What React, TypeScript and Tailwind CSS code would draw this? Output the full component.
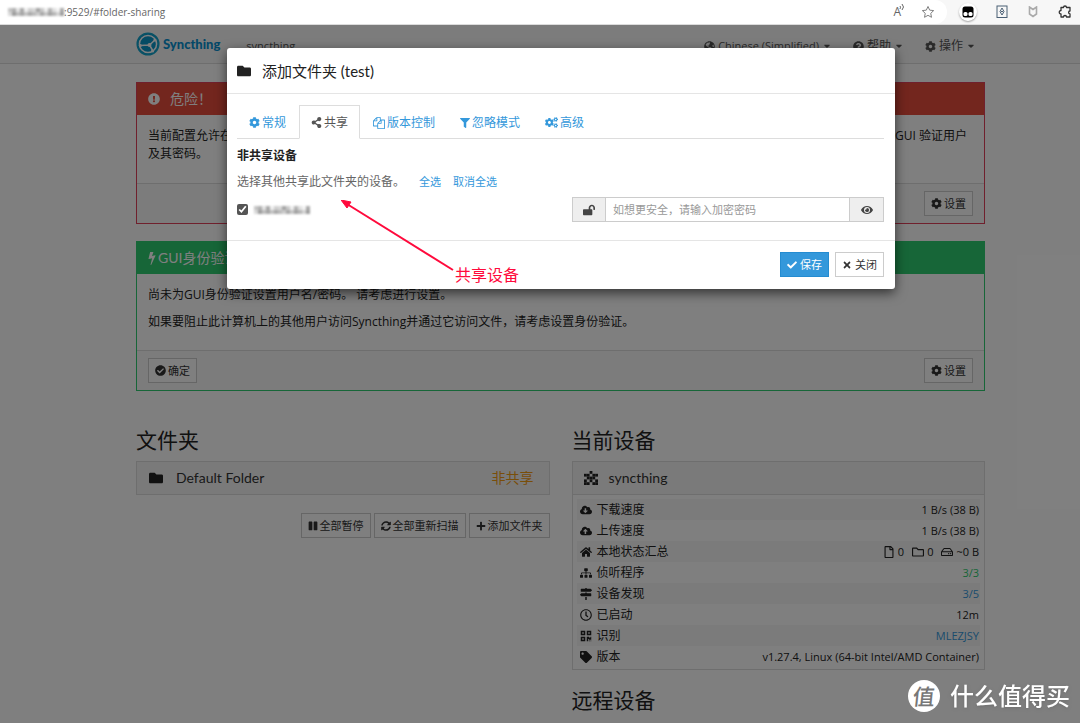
import React from "react";
import {
  FaCaretDown, FaCheck, FaCheckCircle, FaCloudDownloadAlt, FaCloudUploadAlt, FaCog, FaCogs,
  FaExclamationCircle, FaEye, FaFilter, FaFolder, FaGlobeAmericas, FaHome, FaLockOpen, FaMapSigns,
  FaPause, FaPlus, FaQrcode, FaQuestionCircle, FaRegClock, FaRegFile, FaRegFolder, FaRegHdd,
  FaShareAlt, FaSitemap, FaSyncAlt, FaTag, FaTimes,
} from "react-icons/fa";

const BODY = "font-['Open_Sans','Noto_Sans_CJK_SC',sans-serif]";
const HEAD = "font-['Lato','Noto_Sans_CJK_SC',sans-serif]";

function CopyIcon() {
  return (
    <svg viewBox="0 0 1792 1792" className="size-3" fill="currentColor" aria-hidden="true">
      <path d="M1696 384q40 0 68 28t28 68v1216q0 40-28 68t-68 28h-960q-40 0-68-28t-28-68v-288h-544q-40 0-68-28t-28-68v-672q0-40 20-88t48-76l408-408q28-28 76-48t88-20h416q40 0 68 28t28 68v328q68-40 128-40h416zm-544 213l-299 299h299v-299zm-640-384l-299 299h299v-299zm196 647l316-316v-416h-384v416q0 40-28 68t-68 28h-416v640h512v-256q0-40 20-88t48-76zm956 804v-1152h-384v416q0 40-28 68t-68 28h-416v640h896z" />
    </svg>
  );
}

function BoltIcon() {
  return (
    <svg viewBox="448 0 896 1792" className="h-3.5 w-2" fill="currentColor" aria-hidden="true">
      <path d="M1333 566q18 20 7 44l-540 1157q-13 25-42 25-4 0-14-2-17-5-25.500-19t-4.500-30l197-808-406 101q-4 1-12 1-18 0-31-11-18-15-13-39l201-825q4-14 16-23t28-9h328q19 0 32 12.500t13 29.500q0 8-5 18l-171 463 396-98q8-2 12-2 19 0 34 15z" />
    </svg>
  );
}

function SyncthingLogo() {
  return (
    <svg viewBox="0 0 24 24" className="size-6" aria-hidden="true">
      <circle cx="12" cy="12" r="10.800" fill="#0b96c8" stroke="#12a5cc" strokeWidth="1.500" />
      <circle cx="12" cy="12" r="8.600" fill="none" stroke="#fff" strokeWidth="1.500" />
      <path d="M13.500 13 4 13.500M13.500 13 19.500 7.500M13.500 13l3.500 6" stroke="#fff" strokeWidth="1.500" fill="none" />
      <circle cx="13.500" cy="13" r="2" fill="#fff" />
      <circle cx="4.300" cy="13.500" r="1.600" fill="#fff" />
      <circle cx="19" cy="8" r="1.600" fill="#fff" />
      <circle cx="16.600" cy="19" r="1.600" fill="#fff" />
    </svg>
  );
}

function Identicon() {
  const cells = ["00100", "11011", "01110", "10101", "11011"];
  return (
    <svg viewBox="0 0 5 5" className="size-3.5" fill="#222" aria-hidden="true">
      {cells.flatMap((row, y) =>
        row.split("").map((c, x) => (c === "1" ? <rect key={`${x}-${y}`} x={x} y={y} width="1" height="1" /> : null))
      )}
    </svg>
  );
}

const topTones = ["bg-[#c4c4c4]", "bg-[#b0b0b0]", "bg-[#e4e4e4]", "bg-[#a9a9a9]", "bg-[#f0f0f0]", "bg-[#cfcfcf]", "bg-[#d8d8d8]", "bg-[#a4a4a4]", "bg-[#c9c9c9]", "bg-[#efefef]", "bg-[#b4b4b4]", "bg-[#e0e0e0]", "bg-[#f4f4f4]", "bg-[#aaaaaa]"];
const bottomTones = ["bg-[#d9d9d9]", "bg-[#9c9c9c]", "bg-[#bdbdbd]", "bg-[#a6a6a6]", "bg-[#c2c2c2]", "bg-[#a9a9a9]", "bg-[#bababa]", "bg-[#cccccc]", "bg-[#a8a8a8]", "bg-[#c6c6c6]", "bg-[#a2a2a2]", "bg-[#b6b6b6]", "bg-[#d2d2d2]", "bg-[#9e9e9e]"];

function Redacted() {
  return (
    <span className="grid grid-cols-14 blur-[1px]" aria-hidden="true">
      {[...topTones, ...bottomTones].map((t, i) => (
        <span key={i} className={`size-1 ${t}`} />
      ))}
    </span>
  );
}

function BrowserBar() {
  return (
    <div className="flex h-[25px] items-center border-b border-[#dcdcdc] bg-[#f7f7f7]">
      <div className="flex h-6 flex-1 items-center rounded-r-xl bg-white pl-2 pr-3 text-[10px] text-[#666]">
        <Redacted />
        <span className="flex-1">:9529/#folder-sharing</span>
        <button type="button" aria-label="朗读" className="relative mr-5 text-[12px] leading-none text-[#666]">
          A
          <svg viewBox="0 0 6 6" className="absolute -right-1 -top-0.5 size-1.5" fill="none" stroke="currentColor" aria-hidden="true">
            <path d="M1 2q1 1 0 3M3 0q3 3 0 6" />
          </svg>
        </button>
        <button type="button" aria-label="收藏" className="text-[#777]">
          <svg viewBox="0 0 24 24" className="size-3.5" fill="none" stroke="currentColor" strokeWidth="1.600" strokeLinejoin="round" aria-hidden="true">
            <path d="m12 2.500 2.900 6.300 6.800.8-5 4.700 1.300 6.800L12 17.700l-6 3.400 1.300-6.800-5-4.700 6.800-.8z" />
          </svg>
        </button>
      </div>
      <div className="flex items-center gap-[19px] pl-3 pr-2">
        <span className="flex size-[18px] items-center justify-center rounded-full bg-white shadow-[0_1px_2px_rgba(0,0,0,0.35)]">
          <svg viewBox="0 0 12 12" className="size-3" aria-hidden="true">
            <rect x="0.500" y="0.500" width="11" height="11" rx="2.500" />
            <rect x="1.500" y="6" width="4" height="4" rx="1.500" fill="#fff" />
            <rect x="6.500" y="6" width="4" height="4" rx="1.500" fill="#fff" />
          </svg>
        </span>
        <svg viewBox="0 0 12 14" className="h-3.5 w-3" fill="none" stroke="#4b6075" aria-hidden="true">
          <rect x="1" y="1" width="10" height="11.500" />
          <path d="M6 3 4 6.500 6 10l2-3.500zM5 6.500h2" />
        </svg>
        <svg viewBox="0 0 12 12" className="size-3" fill="none" stroke="#aaa" strokeWidth="1.600" aria-hidden="true">
          <path d="M2.500 1v7L6 10.500 9.500 8V1L6 3.500z" />
        </svg>
        <svg viewBox="0 0 14 14" className="size-3.5" fill="none" stroke="#333" strokeWidth="1.300" strokeLinejoin="round" aria-hidden="true">
          <path d="M3 2.500h2.500a1.500 1.500 0 0 1 3 0H12V6a1.300 1.300 0 1 0 0 2.800V12H8.500a1.500 1.500 0 0 0-3 0H3V9a1.700 1.700 0 1 1 0-3.500z" />
        </svg>
      </div>
    </div>
  );
}

function SmallButton({ icon, children }: { icon: React.ReactNode; children: React.ReactNode }) {
  return (
    <button type="button" className="flex h-[25px] items-center gap-0.5 border border-[#ccc] bg-white px-1.5 text-[11px] text-[#333]">
      {icon}
      {children}
    </button>
  );
}

function NavMenu({ icon, children }: { icon: React.ReactNode; children: React.ReactNode }) {
  return (
    <button type="button" className="flex items-center gap-[3px] text-[#555]">
      {icon}
      {children}
      <FaCaretDown className="ml-0.5 h-2.5 w-1.5" />
    </button>
  );
}

const rows: { icon: React.ReactNode; label: string; value: React.ReactNode; tone?: string }[] = [
  { icon: <FaCloudDownloadAlt />, label: "下载速度", value: "1 B/s (38 B)" },
  { icon: <FaCloudUploadAlt />, label: "上传速度", value: "1 B/s (38 B)" },
  {
    icon: <FaHome />,
    label: "本地状态汇总",
    value: (
      <span className="flex items-center justify-end gap-2">
        <span className="flex items-center gap-[3px]"><FaRegFile className="size-3" />0</span>
        <span className="flex items-center gap-[3px]"><FaRegFolder className="size-3" />0</span>
        <span className="flex items-center gap-[3px]"><FaRegHdd className="size-3" />~0 B</span>
      </span>
    ),
  },
  { icon: <FaSitemap />, label: "侦听程序", value: "3/3", tone: "text-[#2ecc71]" },
  { icon: <FaMapSigns />, label: "设备发现", value: "3/5", tone: "text-[#3498db]" },
  { icon: <FaRegClock />, label: "已启动", value: "12m" },
  { icon: <FaQrcode />, label: "识别", value: <a href="#device-id">MLEZJSY</a>, tone: "text-[#3498db]" },
  { icon: <FaTag />, label: "版本", value: "v1.27.4, Linux (64-bit Intel/AMD Container)" },
];

function Page() {
  return (
    <div className="bg-white text-[12px] leading-[18px] text-[#222]">
      <nav className="flex h-[39px] items-center border-b border-[#ddd] bg-[#f8f8f8] pl-[136px] pr-[106px]">
        <a href="#home" className={`${HEAD} flex items-center gap-[3px] text-[13px] font-black text-[#0891d1]`}>
          <SyncthingLogo />
          Syncthing
        </a>
        <span className="ml-[26px] flex-1 pt-1 text-[11px] text-[#555]">syncthing</span>
        <div className="flex gap-[23px] pt-1">
          <NavMenu icon={<FaGlobeAmericas className="size-[11px]" />}>
            <span className="text-[11px]">Chinese (Simplified)</span>
          </NavMenu>
          <NavMenu icon={<FaQuestionCircle className="size-[11px]" />}>帮助</NavMenu>
          <NavMenu icon={<FaCog className="size-[11px]" />}>操作</NavMenu>
        </div>
      </nav>

      <main className="pl-[136px] pr-[95px] pt-[18px]">
        <section className="border border-[#e0405a] bg-white">
          <h3 className={`${HEAD} flex h-8 items-center gap-2.5 bg-[#e74c3c] px-[11px] text-[14px] text-white`}>
            <FaExclamationCircle className="size-3" />
            危险！
          </h3>
          <div className="h-[68px] px-[11px] pt-3">
            <p className="flex justify-between pr-1.5">
              <span>当前配置允许在</span>
              <span>GUI 验证用户</span>
            </p>
            <p>及其密码。</p>
          </div>
          <div className="flex justify-end border-t border-[#ddd] bg-[#f8f8f8] px-[11px] py-[7px]">
            <SmallButton icon={<FaCog className="size-[11px]" />}>设置</SmallButton>
          </div>
        </section>

        <section className="mt-[17px] border border-[#2ecc71] bg-white">
          <h3 className={`${HEAD} flex h-8 items-center gap-0.5 bg-[#2ecc71] px-[11px] text-[14px] text-white`}>
            <BoltIcon />
            GUI身份验证
          </h3>
          <div className="space-y-[9px] px-[11px] pb-[19px] pt-3">
            <p>尚未为GUI身份验证设置用户名/密码。 请考虑进行设置。</p>
            <p>如果要阻止此计算机上的其他用户访问Syncthing并通过它访问文件，请考虑设置身份验证。</p>
          </div>
          <div className="flex justify-between border-t border-[#ddd] bg-[#f8f8f8] px-[11px] py-[7px]">
            <SmallButton icon={<FaCheckCircle className="size-[11px]" />}>确定</SmallButton>
            <SmallButton icon={<FaCog className="size-[11px]" />}>设置</SmallButton>
          </div>
        </section>

        <div className="grid grid-cols-2 gap-[22px] pt-[35px]">
          <section>
            <h2 className={`${HEAD} text-[21px] leading-7`}>文件夹</h2>
            <button type="button" className={`${HEAD} mt-[7px] flex h-[34px] w-full items-center border border-[#ddd] bg-[#f5f5f5] pl-3 pr-[15px] text-[14px] text-[#333]`}>
              <FaFolder className="size-3.5 text-[#222]" />
              <span className="ml-[13px] flex-1 text-left">Default Folder</span>
              <span className="text-[#f39c12]">非共享</span>
            </button>
            <div className="mt-[18px] flex justify-end gap-[3px]">
              <SmallButton icon={<FaPause className="size-2.5" />}>全部暂停</SmallButton>
              <SmallButton icon={<FaSyncAlt className="size-2.5" />}>全部重新扫描</SmallButton>
              <SmallButton icon={<FaPlus className="size-2.5" />}>添加文件夹</SmallButton>
            </div>
          </section>

          <section>
            <h2 className={`${HEAD} text-[21px] leading-7`}>当前设备</h2>
            <div className="mt-[7px] border border-[#ddd]">
              <h3 className={`${HEAD} flex h-[33px] items-center gap-[11px] border-b border-[#ddd] bg-[#f5f5f5] px-[11px] text-[14px] text-[#333]`}>
                <Identicon />
                syncthing
              </h3>
              <div className="px-1 pb-0.5 pt-1">
                <table className="w-full">
                  <tbody>
                    {rows.map((r) => (
                      <tr key={r.label} className="h-[21px] odd:bg-[#f6f6f6]">
                        <th scope="row" className="p-0 pl-[3px] text-left font-normal">
                          <span className="flex items-center gap-[5px]">
                            {r.icon}
                            {r.label}
                          </span>
                        </th>
                        <td className={`p-0 pr-px text-right text-[11px] ${r.tone ?? ""}`}>{r.value}</td>
                      </tr>
                    ))}
                  </tbody>
                </table>
              </div>
            </div>
            <h2 className={`${HEAD} mt-4 text-[21px] leading-7`}>远程设备</h2>
          </section>
        </div>
      </main>
    </div>
  );
}

const tabs = [
  { label: "常规", icon: <FaCog className="size-[11px]" /> },
  { label: "共享", icon: <FaShareAlt className="size-[11px]" />, active: true },
  { label: "版本控制", icon: <CopyIcon /> },
  { label: "忽略模式", icon: <FaFilter className="size-2.5" /> },
  { label: "高级", icon: <FaCogs className="size-[13px]" /> },
];

function FolderDialog() {
  return (
    <div role="dialog" aria-labelledby="dialog-title" className="rounded-[3px] bg-white text-[12px] leading-[18px] text-[#222] shadow-[0_4px_12px_rgba(0,0,0,0.6)]">
      <h1 id="dialog-title" className={`${HEAD} flex h-[46px] items-center gap-[11px] border-b border-[#e5e5e5] px-[10px] text-[15px]`}>
        <FaFolder className="size-3.5" />
        添加文件夹 (test)
      </h1>
      <div className="pb-[18px] pl-[10px] pr-[11px] pt-[11px]">
        <div role="tablist" className="flex h-[34px] gap-px border-b border-[#ddd]">
          {tabs.map((t) => (
            <button
              key={t.label}
              type="button"
              role="tab"
              aria-selected={!!t.active}
              className={`flex h-[34px] items-center gap-0.5 border px-[11px] pt-px ${
                t.active ? "border-[#ddd] border-b-white bg-white text-[#555]" : "border-transparent text-[#3498db]"
              }`}
            >
              {t.icon}
              {t.label}
            </button>
          ))}
        </div>
        <h2 className="mt-2 font-bold">非共享设备</h2>
        <p className="mt-2 flex text-[#666]">
          选择其他共享此文件夹的设备。
          <a href="#select-all" className="ml-[14px] text-[11px] text-[#3498db]">全选</a>
          <a href="#select-none" className="ml-3 text-[11px] text-[#3498db]">取消全选</a>
        </p>
        <div className="mt-[6px] flex items-center">
          <label className="flex flex-1 items-center gap-1.5">
            <input type="checkbox" defaultChecked aria-label="设备" className="size-[11px] accent-[#555]" />
            <Redacted />
          </label>
          <div className="flex h-[25px] w-[312px] border border-[#ccc] text-[#444]">
            <label htmlFor="pw" aria-label="加密密码" className="flex w-[33px] items-center justify-center border-r border-[#ccc] bg-[#eee]">
              <FaLockOpen className="size-3" />
            </label>
            <input id="pw" type="password" placeholder="如想更安全，请输入加密密码" className="min-w-0 flex-1 px-[7px] text-[11px] placeholder:text-[#999]" />
            <button type="button" aria-label="显示密码" className="flex w-[34px] items-center justify-center border-l border-[#ccc] bg-[#eee]">
              <FaEye className="size-3" />
            </button>
          </div>
        </div>
      </div>
      <div className="flex justify-end gap-1.5 border-t border-[#e5e5e5] px-[11px] pb-3 pt-[11px]">
        <button type="button" className="flex h-[25px] items-center gap-[3px] border border-[#258cd1] bg-[#3498db] px-1.5 text-[11px] text-white">
          <FaCheck className="size-2.5" />
          保存
        </button>
        <button type="button" className="flex h-[25px] items-center gap-[3px] border border-[#ccc] bg-white px-1.5 text-[11px] text-[#333]">
          <FaTimes className="size-2.5" />
          关闭
        </button>
      </div>
    </div>
  );
}

export default function App() {
  return (
    <div className={`${BODY} relative h-screen overflow-hidden bg-white`}>
      <BrowserBar />
      <Page />
      <div className="absolute inset-x-0 bottom-0 top-[25px] bg-black/50 pl-[227px] pr-[185px] pt-[23px]">
        <FolderDialog />
      </div>
      <svg viewBox="0 0 114 72" className="absolute left-[341px] top-[200px] h-[72px] w-[114px]" aria-hidden="true">
        <path d="M6 4 112 70" stroke="#ff0a3c" strokeWidth="2" />
        <path d="M0 0 10 2 6 8z" fill="#ff0a3c" stroke="#ff0a3c" />
      </svg>
      <span className="absolute left-[455px] top-[263px] text-[16px] leading-6 text-[#ff0a3c]">共享设备</span>
      <div className="absolute bottom-[11px] right-2.5 flex items-center gap-2.5 text-white">
        <span className="flex size-8 items-center justify-center rounded-full bg-white text-[22px] font-medium leading-none text-[#777]">
          <span className="-skew-x-6">值</span>
        </span>
        <span className="text-[24px] font-medium leading-8 drop-shadow">什么值得买</span>
      </div>
    </div>
  );
}
